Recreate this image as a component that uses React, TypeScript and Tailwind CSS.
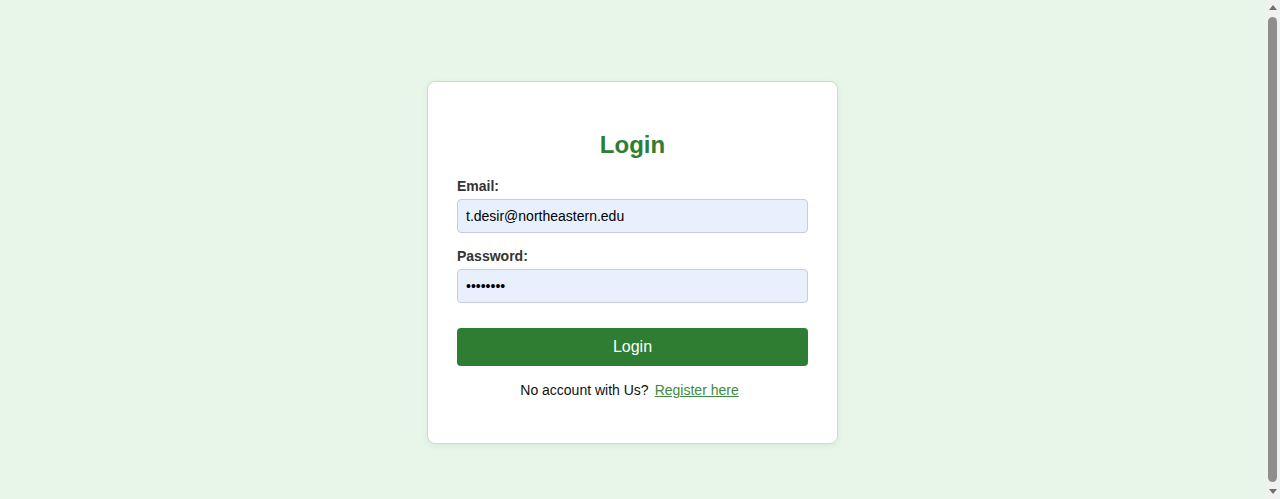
import React from "react";

export default function App() {
  const font = { fontFamily: '"Liberation Sans", Arial, sans-serif' };
  return (
    <div className="h-screen w-full flex overflow-hidden" style={font}>
      <div className="flex-1 bg-[#e8f5e9] pt-[81px] flex justify-center items-start">
        <div className="w-[411px] bg-white border border-[#c8e0c6] rounded-[8px] shadow-[0_2px_6px_rgba(0,0,0,0.06)] px-[29px] pt-[49px] pb-[45px]">
          <h2 className="text-[24px] leading-[28px] font-bold text-[#2e7d32] text-center mb-[19px]">
            Login
          </h2>
          <label className="block text-[14px] leading-[16px] font-bold text-[#333] mb-[5px]">
            Email:
          </label>
          <input
            type="email"
            readOnly
            value="t.desir@northeastern.edu"
            className="block w-full h-[34px] px-[8px] text-[14px] text-black bg-[#e8f0fe] border border-[#c9cdd6] rounded-[4px] outline-none"
            style={font}
          />
          <label className="block text-[14px] leading-[16px] font-bold text-[#333] mt-[15px] mb-[5px]">
            Password:
          </label>
          <input
            type="password"
            readOnly
            value="password"
            className="block w-full h-[34px] px-[8px] text-[14px] text-black bg-[#e8f0fe] border border-[#c9cdd6] rounded-[4px] outline-none"
            style={font}
          />
          <button
            className="block w-full h-[38px] mt-[25px] bg-[#2e7d32] text-white text-[16px] rounded-[4px]"
            style={font}
          >
            Login
          </button>
          <p className="mt-[16px] pr-[6px] text-center text-[14px] leading-[16px] text-[#111]">
            No account with Us?
            <a href="#" className="ml-[6px] text-[#3d8b40] underline">
              Register here
            </a>
          </p>
        </div>
      </div>
      <div className="w-[15px] h-full bg-[#f1f1f1] flex flex-col items-center">
        <div className="h-[15px] w-full flex items-center justify-center">
          <svg width="8" height="5" viewBox="0 0 8 5">
            <polygon points="4,0 8,5 0,5" fill="#6f6f6f" />
          </svg>
        </div>
        <div className="flex-1 w-[9px] rounded-full bg-[#8e8e8e] my-[2px]" />
        <div className="h-[15px] w-full flex items-center justify-center">
          <svg width="8" height="5" viewBox="0 0 8 5">
            <polygon points="0,0 8,0 4,5" fill="#6f6f6f" />
          </svg>
        </div>
      </div>
    </div>
  );
}
